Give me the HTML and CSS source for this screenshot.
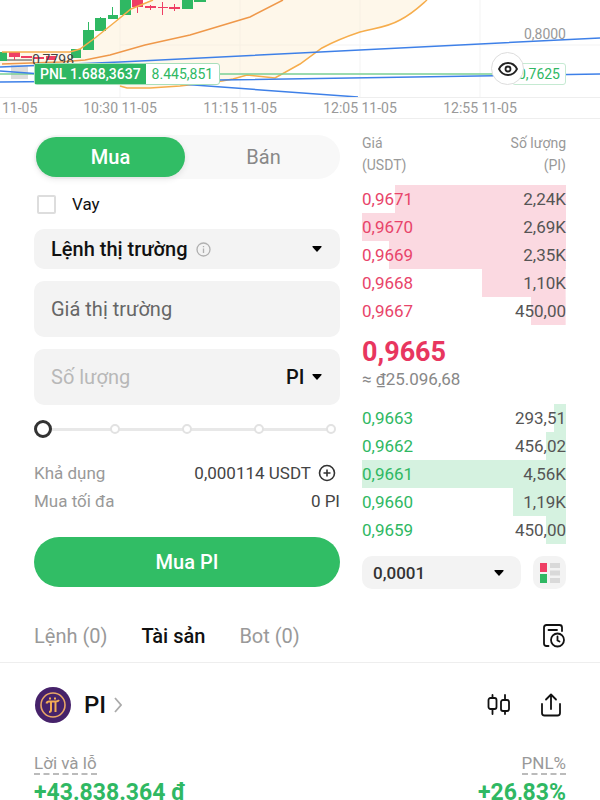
FILE: index.html
```
<!DOCTYPE html>
<html lang="vi">
  <head>
    <meta charset="UTF-8" />
    <meta name="viewport" content="width=device-width, initial-scale=1.0" />
    <title>PI/USDT</title>
    <link rel="stylesheet" href="styles.css">
  </head>
  <body>
    <section class="chart">
      <div class="plot">
        <svg class="plot-lines" viewBox="0 0 600 97" preserveAspectRatio="none" fill="none">
          <!-- grid -->
          <path d="M0 45H600M120 0V97M240 0V97M360 0V97M480 0V97" stroke="#f3f3f3" />
          <!-- band -->
          <path d="M0 52H70L80 49L95 38L115 22L131 9L153 0H427C418 8 412 14 400 20C388 27 376 28 360 32C345 37 333 42 322 48L300 64L275 78L247 75L233 79L180 86L150 88H127L120 86L60 68L0 66Z" fill="#fef7ea" />
          <path d="M120 0V86M240 0V76M360 0V32M120 45H327" stroke="#f7f0e4" />
          <rect x="11" y="65" width="17" height="14" fill="#dddddd" />
          <path d="M0 60H32" stroke="#444444" />
          <!-- candles -->
          <g fill="#2fb863">
            <path d="M0 52h7v9H0zM71 49h10v9H71zM83 30h11v20H83zM95 18h11v13H95zM108 15h10v4h-10zM120 0h11v15h-11zM182 0h11v9h-11zM194 0h12v2h-12z" />
            <path d="M88 22h1v8h-1zM100 17h1v2h-1zM112 7h1v8h-1z" />
          </g>
          <g fill="#ef3e64">
            <path d="M9 52h11v5H9zM21 56h11v2H21zM34 57h10v2H34zM46 56h10v4H46zM132 0h11v7h-11zM145 6h11v2h-11zM158 7h10v1h-10zM169 7h11v2h-11z" />
            <path d="M14 57h1v3h-1zM137 7h1v6h-1zM150 5h1v5h-1zM162 2h1v13h-1zM174 4h1v7h-1z" />
          </g>
          <!-- indicators -->
          <g stroke-width="1.5">
            <path d="M2 52H70L80 49L95 38L115 22L131 9L153 0M120 86L127 88H150L180 86L222 81L233 79L247 75L275 78L300 64L322 48C333 42 345 37 360 32C376 28 388 27 400 20C412 14 418 8 427 0" stroke="#f6ad4c" />
            <path d="M2 64L60 62L85 60L110 55L145 45L190 35L250 17L283 0" stroke="#ef984a" />
            <path d="M0 74H500" stroke="#79cf95" />
            <path d="M0 67L120 62L300 53L600 38M0 82L218 80L600 74M0 71L358 97" stroke="#3e80e8" />
          </g>
        </svg>
        <span class="low-price">0,7798</span>
        <div class="pnl"><b>PNL 1.688,3637</b><span>8.445,851</span></div>
        <span class="axis-price">0,8000</span>
        <span class="price-tag">0,7625</span>
        <button class="eye" aria-label="Ẩn hiện">
          <svg width="20" height="14" viewBox="0 0 20 14" fill="none" stroke="#222" stroke-width="1.8">
            <path d="M1 7C5-1 15-1 19 7C15 15 5 15 1 7Z" />
            <circle cx="10" cy="7" r="2.5" />
          </svg>
        </button>
      </div>
      <div class="time-axis">
        <span>11-05</span>
        <span>10:30 11-05</span>
        <span>11:15 11-05</span>
        <span>12:05 11-05</span>
        <span>12:55 11-05</span>
      </div>
    </section>

    <main class="trade">
      <form class="order">
        <div class="side">
          <button type="button" class="active">Mua</button>
          <button type="button">Bán</button>
        </div>
        <label class="loan"><input type="checkbox" />Vay</label>
        <div class="field order-type">
          <select aria-label="Loại lệnh"><option>Lệnh thị trường</option></select>
          <svg width="15" height="15" viewBox="0 0 15 15" fill="none" stroke="#b0b0b0" stroke-width="1.3">
            <circle cx="7.5" cy="7.5" r="6.5" />
            <path d="M7.5 6.5V11M7.5 4V5.3" />
          </svg>
          <svg class="arrow" width="10" height="6" viewBox="0 0 10 6"><path d="M1 0H9Q10 0 9.500 1L5.500 5.500Q5 6 4.500 5.500L.5 1Q0 0 1 0Z" /></svg>
        </div>
        <div class="field">
          <input class="price" type="text" aria-label="Giá" placeholder="Giá thị trường" />
        </div>
        <div class="field">
          <input type="text" aria-label="Số lượng" placeholder="Số lượng" />
          <select class="unit" aria-label="Đơn vị"><option>PI</option></select>
          <svg class="arrow near" width="10" height="6" viewBox="0 0 10 6"><path d="M1 0H9Q10 0 9.500 1L5.500 5.500Q5 6 4.500 5.500L.5 1Q0 0 1 0Z" /></svg>
        </div>
        <div class="slider">
          <div class="steps"><i></i><i></i><i></i><i></i><i></i></div>
          <input type="range" min="0" max="100" value="0" aria-label="Tỷ lệ" />
        </div>
        <div class="info">
          <span>Khả dụng</span>
          <button type="button">0,000114 USDT
            <svg width="18" height="18" viewBox="0 0 18 18" fill="none" stroke="#333" stroke-width="1.6">
              <circle cx="9" cy="9" r="7.5" />
              <path d="M9 5.500V12.500M5.500 9H12.500" />
            </svg>
          </button>
        </div>
        <div class="info">
          <span>Mua tối đa</span>
          <span class="value">0 PI</span>
        </div>
        <button type="button" class="submit">Mua PI</button>
      </form>

      <section class="book">
        <table class="asks">
          <thead>
            <tr><th>Giá<br>(USDT)</th><th>Số lượng<br>(PI)</th></tr>
          </thead>
          <tbody>
            <tr style="--depth: 84%"><td>0,9671</td><td>2,24K</td></tr>
            <tr style="--depth: 100%"><td>0,9670</td><td>2,69K</td></tr>
            <tr style="--depth: 87%"><td>0,9669</td><td>2,35K</td></tr>
            <tr style="--depth: 41%"><td>0,9668</td><td>1,10K</td></tr>
            <tr style="--depth: 17%"><td>0,9667</td><td>450,00</td></tr>
          </tbody>
        </table>
        <div class="last">0,9665</div>
        <div class="fiat">≈ ₫25.096,68</div>
        <table class="bids">
          <tbody>
            <tr style="--depth: 6%"><td>0,9663</td><td>293,51</td></tr>
            <tr style="--depth: 10%"><td>0,9662</td><td>456,02</td></tr>
            <tr style="--depth: 100%"><td>0,9661</td><td>4,56K</td></tr>
            <tr style="--depth: 26%"><td>0,9660</td><td>1,19K</td></tr>
            <tr style="--depth: 10%"><td>0,9659</td><td>450,00</td></tr>
          </tbody>
        </table>
        <div class="book-tools">
          <div class="tick">
            <select aria-label="Bước giá"><option>0,0001</option></select>
            <svg class="arrow" width="10" height="6" viewBox="0 0 10 6"><path d="M1 0H9Q10 0 9.500 1L5.500 5.500Q5 6 4.500 5.500L.5 1Q0 0 1 0Z" /></svg>
          </div>
          <button class="layout" aria-label="Kiểu sổ lệnh">
            <svg width="20" height="20" viewBox="0 0 20 20">
              <path d="M0 0h7v9H0z" fill="#ef3e64" />
              <path d="M0 11h7v9H0z" fill="#2fb863" />
              <path d="M10 0h10v5H10zM10 7.500h10v5H10zM10 15h10v5H10z" fill="#d9d9d9" />
            </svg>
          </button>
        </div>
      </section>
    </main>

    <nav class="tabs">
      <a href="#orders">Lệnh (0)</a>
      <a href="#assets" class="active">Tài sản</a>
      <a href="#bots">Bot (0)</a>
      <button aria-label="Lịch sử">
        <svg width="24" height="24" viewBox="0 0 24 24" fill="none" stroke="#111" stroke-width="1.8" stroke-linecap="round">
          <path d="M6.500 22H4.500Q2 22 2 19.500V3.500Q2 1 4.500 1H17.500Q20 1 20 3.500V7M6.500 6H15" />
          <circle cx="15.500" cy="16" r="6.500" />
          <path d="M15.500 12.500V16.500L17.500 17.500" />
        </svg>
      </button>
    </nav>

    <section class="asset">
      <div class="asset-head">
        <svg width="38" height="38" viewBox="0 0 38 38" fill="none">
          <circle cx="19" cy="19" r="18" fill="#46226a" />
          <circle cx="19" cy="19" r="12" stroke="#e9a767" stroke-width="1.6" />
          <g stroke="#f4ad55" stroke-width="2">
            <path d="M12.500 17.500Q13 15.500 15 15.500H22Q24 15.500 25 14M17 16V24Q17 26 15 26M21.500 16V26" />
            <path d="M16 11.500V13.500M21 11.500V13.500" />
          </g>
        </svg>
        <a href="#pi">PI
          <svg width="8" height="16" viewBox="0 0 8 16" fill="none" stroke="#aaa" stroke-width="1.8"><path d="M1 1L7 8L1 15" /></svg>
        </a>
        <button aria-label="Biểu đồ">
          <svg width="24" height="24" viewBox="0 0 24 24" fill="none" stroke="#111" stroke-width="1.8" stroke-linecap="round">
            <rect x="1.500" y="5" width="8" height="11" rx="2" />
            <rect x="14" y="7" width="8" height="11" rx="2" />
            <path d="M5.500 2V5M5.500 16V21M18 2V7M18 18V21" />
          </svg>
        </button>
        <button aria-label="Chia sẻ">
          <svg width="24" height="24" viewBox="0 0 24 24" fill="none" stroke="#111" stroke-width="1.8" stroke-linecap="round" stroke-linejoin="round">
            <path d="M3 11V20Q3 22.500 5.500 22.500H18.500Q21 22.500 21 20V11M12 16V2M7 6.500L12 1.500L17 6.500" />
          </svg>
        </button>
      </div>
      <div class="profit">
        <div><span class="name">Lời và lỗ</span><strong>+43.838.364 ₫</strong></div>
        <div><span class="name">PNL%</span><strong>+26,83%</strong></div>
      </div>
    </section>
  </body>
</html>
```
FILE: styles.css
```
* {
  box-sizing: border-box;
}

body {
  margin: 0;
  height: 100vh;
  overflow: hidden;
  background-color: #fff;
  color: #111;
  font-family: Roboto, "Noto Sans", sans-serif;
  font-size: 17px;
}

button,
select,
input {
  margin: 0;
  padding: 0;
  border: 0;
  background: none;
  color: inherit;
  font: inherit;
}

select {
  appearance: none;
}

a {
  color: inherit;
  text-decoration: none;
}

svg {
  display: block;
  flex: none;
}

/* chart */
.plot {
  position: relative;
  height: 97px;
  overflow: hidden;
  font-size: 14px;
  line-height: 20px;
}

.plot-lines {
  width: 100%;
  height: 97px;
}

.low-price {
  position: absolute;
  left: 32px;
  top: 50px;
  color: #444;
}

.pnl {
  position: absolute;
  left: 34px;
  top: 63px;
  display: flex;
  border: 1px solid #a9dfbb;
  border-radius: 3px;
  background-color: #fff;
  color: #2fb863;
}

.pnl b {
  padding: 0 5px;
  background-color: #2fb863;
  color: #fff;
  font-weight: 500;
}

.pnl span {
  padding: 0 6px;
}

.axis-price {
  position: absolute;
  right: 34px;
  top: 24px;
  color: #999;
}

.price-tag {
  position: absolute;
  right: 34px;
  top: 63px;
  padding: 0 5px;
  border: 1px solid #c5ead2;
  border-radius: 3px;
  background-color: #fff;
  color: #2fb863;
}

.eye {
  position: absolute;
  right: 76px;
  top: 52px;
  width: 33px;
  height: 33px;
  display: grid;
  place-items: center;
  border: 1px solid #ddd;
  border-radius: 50%;
  background-color: #fff;
}

.time-axis {
  display: flex;
  border-top: 1px solid #eee;
  border-bottom: 1px solid #eee;
  color: #999;
  font-size: 14px;
  line-height: 20px;
}

.time-axis span {
  width: 20%;
  text-align: center;
}

.time-axis span:first-child {
  width: 10%;
  padding-left: 2px;
  text-align: left;
}

/* order form + order book */
.trade {
  display: grid;
  grid-template-columns: minmax(0, 3fr) minmax(0, 2fr);
  gap: 22px;
  padding: 13px 34px 0;
}

.order {
  display: flex;
  flex-direction: column;
  padding-top: 3px;
}

.side {
  display: grid;
  grid-template-columns: 1fr 1fr;
  gap: 4px;
  padding: 2px;
  border-radius: 22px;
  background-color: #f8f8f8;
  color: #888;
  font-size: 20px;
  line-height: 40px;
}

.side .active {
  border-radius: 20px;
  background-color: #31bd65;
  color: #fff;
  font-weight: 500;
  box-shadow: 0 2px 6px #0000001a;
}

.loan {
  display: flex;
  align-items: center;
  gap: 16px;
  height: 50px;
  padding-left: 3px;
}

.loan input {
  appearance: none;
  width: 19px;
  height: 19px;
  border: 2px solid #ddd;
  border-radius: 2px;
}

.field {
  display: flex;
  align-items: center;
  height: 56px;
  margin-bottom: 12px;
  padding: 0 18px 0 17px;
  border-radius: 10px;
  background-color: #f3f3f3;
  font-size: 20px;
}

.field input {
  flex: 1;
  min-width: 0;
}

.field input::placeholder {
  color: #b8b8b8;
  opacity: 1;
}

.field .price::placeholder {
  color: #666;
}

.order-type {
  gap: 8px;
  height: 40px;
  font-weight: 500;
}

.unit {
  font-weight: 500;
}

.arrow {
  margin-left: auto;
}

.arrow.near {
  margin-left: 7px;
}

.slider {
  display: grid;
  align-items: center;
  height: 24px;
  margin-bottom: 18px;
}

.slider input,
.steps {
  grid-area: 1 / 1;
}

.slider input {
  appearance: none;
  width: 100%;
  height: 18px;
}

.slider input::-webkit-slider-thumb {
  appearance: none;
  width: 18px;
  height: 18px;
  border: 3px solid #333;
  border-radius: 50%;
  background-color: #fff;
}

.steps {
  display: flex;
  justify-content: space-between;
  padding: 0 4px;
  background: linear-gradient(#e8e8e8, #e8e8e8) center / calc(100% - 18px) 3px no-repeat;
}

.steps i {
  width: 10px;
  height: 10px;
  border: 2px solid #e2e2e2;
  border-radius: 50%;
  background-color: #fff;
}

.info {
  display: flex;
  align-items: center;
  justify-content: space-between;
  height: 28px;
  color: #999;
  font-size: 17px;
}

.info button {
  display: flex;
  align-items: center;
  gap: 7px;
  padding-right: 4px;
  color: #444;
}

.info .value {
  color: #444;
}

.submit {
  height: 50px;
  margin-top: 22px;
  border-radius: 25px;
  background-color: #31bd65;
  color: #fff;
  font-size: 20px;
  font-weight: 500;
}

.book table {
  width: 100%;
  border-collapse: collapse;
}

.book th {
  padding: 0 0 9px;
  color: #999;
  font-size: 14px;
  font-weight: 400;
  line-height: 22px;
  text-align: left;
}

.book td {
  height: 28px;
  padding: 0;
  color: #555;
  font-size: 17px;
}

.book th:last-child,
.book td:last-child {
  text-align: right;
}

.asks tbody tr {
  background: linear-gradient(#fbd9e1, #fbd9e1) right / var(--depth) 100% no-repeat;
}

.asks td:first-child {
  color: #e8446a;
}

.bids tr {
  background: linear-gradient(#d5f2e0, #d5f2e0) right / var(--depth) 100% no-repeat;
}

.bids td:first-child {
  color: #2fb863;
}

.last {
  padding-top: 11px;
  color: #e8365f;
  font-size: 27px;
  font-weight: 700;
  line-height: 32px;
}

.fiat {
  margin-bottom: 14px;
  color: #888;
  font-size: 17px;
  line-height: 22px;
}

.book-tools {
  display: flex;
  gap: 12px;
  padding-top: 12px;
}

.tick {
  flex: 1;
  display: flex;
  align-items: center;
  height: 33px;
  padding: 0 17px 0 11px;
  border-radius: 10px;
  background-color: #f3f3f3;
  color: #333;
  font-weight: 500;
}

.layout {
  display: grid;
  place-items: center;
  width: 33px;
  height: 33px;
  border-radius: 10px;
  background-color: #f3f3f3;
}

/* bottom tabs */
.tabs {
  display: flex;
  align-items: center;
  gap: 34px;
  height: 53px;
  margin-top: 21px;
  padding: 0 34px;
  border-bottom: 1px solid #eee;
  color: #999;
  font-size: 20px;
}

.tabs .active {
  color: #111;
  font-weight: 500;
}

.tabs button {
  margin-left: auto;
}

.asset {
  padding: 23px 34px 0;
}

.asset-head {
  display: flex;
  align-items: center;
  gap: 28px;
  padding-right: 3px;
}

.asset-head a {
  display: flex;
  align-items: center;
  gap: 8px;
  margin-left: -16px;
  margin-right: auto;
  font-size: 24px;
  font-weight: 500;
}

.profit {
  display: flex;
  justify-content: space-between;
  padding-top: 29px;
}

.profit div {
  display: flex;
  flex-direction: column;
  align-items: flex-start;
}

.profit div:last-child {
  align-items: flex-end;
}

.name {
  border-bottom: 2px dashed #bbb;
  color: #999;
  font-size: 17px;
  line-height: 20px;
}

.profit strong {
  padding-top: 4px;
  color: #2fb863;
  font-size: 23px;
  line-height: 28px;
}
```
